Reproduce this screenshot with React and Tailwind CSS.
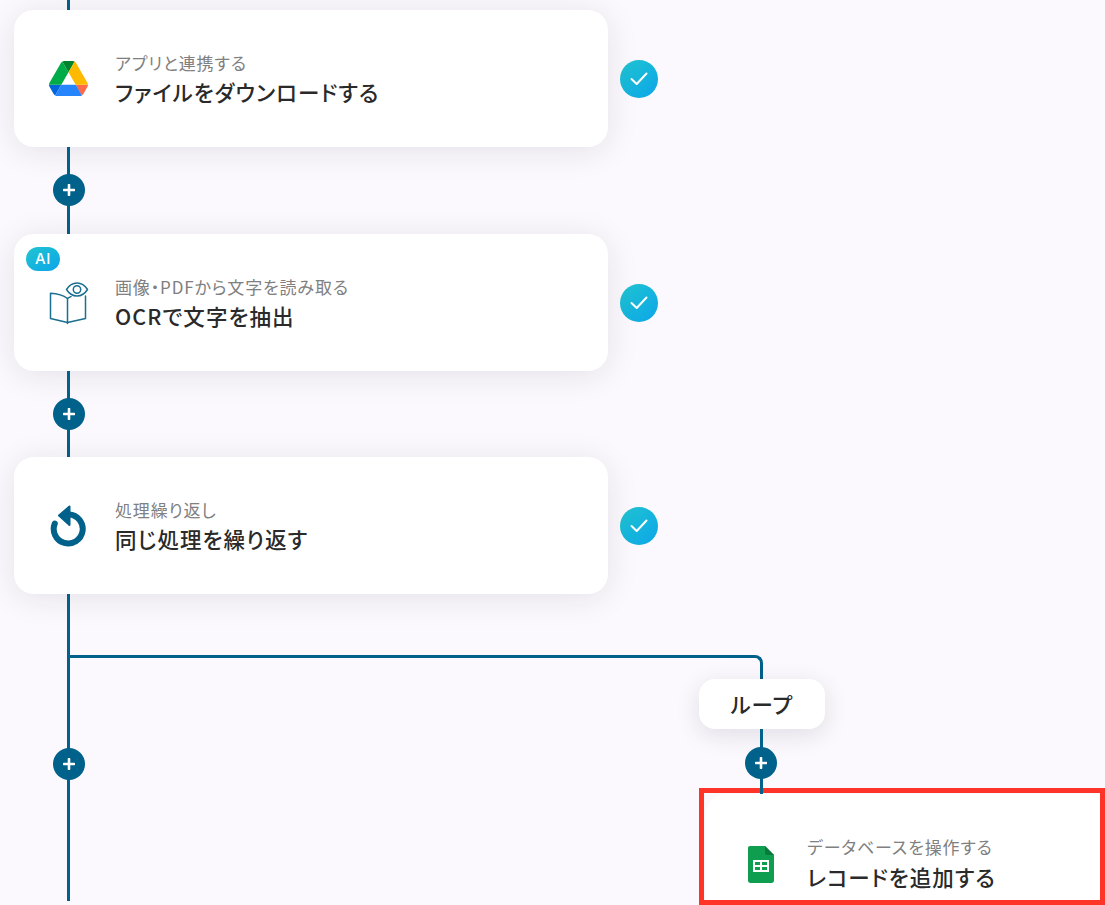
const LINE = "bg-[#00618a]";

function PlusNode({ className = "" }) {
  return (
    <div className={"absolute w-8 h-8 rounded-full bg-[#00618a] flex items-center justify-center " + className}>
      <svg width="12" height="12" viewBox="0 0 12 12">
        <path d="M6 1v10M1 6h10" stroke="#fff" strokeWidth="2.6" strokeLinecap="round" />
      </svg>
    </div>
  );
}

function Connector({ h, top }) {
  return (
    <div className={"relative " + h}>
      <div className={"ml-[53px] w-[3px] h-full " + LINE} />
      <PlusNode className={"left-[39px] " + top} />
    </div>
  );
}

function DriveIcon() {
  return (
    <svg width="39" height="35" viewBox="0 0 87.3 78">
      <path d="m6.6 66.85 3.85 6.65c.8 1.4 1.95 2.5 3.3 3.3l13.75-23.8h-27.5c0 1.55.4 3.1 1.2 4.5z" fill="#0066da" />
      <path d="m43.65 25-13.75-23.8c-1.35.8-2.5 1.9-3.3 3.3l-25.4 44a9.06 9.06 0 0 0 -1.2 4.5h27.5z" fill="#00ac47" />
      <path d="m73.55 76.8c1.35-.8 2.5-1.9 3.3-3.3l1.6-2.75 7.65-13.25c.8-1.4 1.2-2.95 1.2-4.5h-27.502l5.852 11.5z" fill="#ff6b4a" />
      <path d="m43.65 25 13.75-23.8c-1.35-.8-2.9-1.2-4.5-1.2h-18.5c-1.6 0-3.15.45-4.5 1.2z" fill="#00832d" />
      <path d="m59.8 53h-32.3l-13.75 23.8c1.35.8 2.9 1.2 4.5 1.2h50.8c1.6 0 3.15-.45 4.5-1.2z" fill="#2684fc" />
      <path d="m73.4 26.5-12.7-22c-.8-1.4-1.95-2.5-3.3-3.3l-13.75 23.8 16.15 28h27.45c0-1.55-.4-3.1-1.2-4.5z" fill="#ffba00" />
    </svg>
  );
}

function BookIcon() {
  return (
    <svg width="40" height="44" viewBox="0 0 40 44" fill="none" stroke="#1b6f90" strokeWidth="1.5" strokeLinejoin="round" strokeLinecap="round">
      <path d="M18.5 17.5C14 14 7 12.5 1.5 12.2V37.5L18.5 41.5L36.5 37.5V15" />
      <path d="M18.5 17.5V42.5" />
      <path d="M18.5 17.5C20 16.5 21 16 22 15.6" />
      <path d="M17.5 8.5C20 4.5 24 2 28 2C32 2 36 4.5 38.5 8.5C36 12.5 32 15 28 15C24 15 20 12.5 17.5 8.5Z" />
      <circle cx="28" cy="8.5" r="3.7" />
    </svg>
  );
}

function LoopIcon() {
  return (
    <svg width="38" height="44" viewBox="0 0 38 44" fill="none">
      <path d="M4.8 19.5A14.5 14.5 0 1 0 19 10.5" stroke="#00618a" strokeWidth="6" strokeLinecap="round" />
      <path d="M9 11.5L19.5 2.5V21Z" fill="#00618a" stroke="#00618a" strokeWidth="2" strokeLinejoin="round" />
    </svg>
  );
}

function SheetsIcon() {
  return (
    <svg width="26" height="37" viewBox="0 0 26 37">
      <path d="M2 0H17L26 9V34.5C26 35.9 24.9 37 23.5 37H2.5C1.1 37 0 35.9 0 34.5V2C0 0.9 0.9 0 2 0Z" fill="#0f9d50" />
      <path d="M17 0L26 9H19C17.9 9 17 8.1 17 7Z" fill="#0a7a3c" />
      <path fillRule="evenodd" d="M5 14H21V26H5ZM7 16V19H12V16ZM14 16V19H19V16ZM7 21V24H12V21ZM14 21V24H19V21Z" fill="#fff" />
    </svg>
  );
}

function CheckBadge() {
  return (
    <div className="w-[38px] h-[38px] rounded-full bg-gradient-to-br from-[#22c4cf] to-[#0ea5e9] flex items-center justify-center">
      <svg width="18" height="14" viewBox="0 0 18 14" fill="none">
        <path d="M1.5 7L6.7 12L16.5 1.5" stroke="#fff" strokeWidth="2" strokeLinecap="round" strokeLinejoin="round" />
      </svg>
    </div>
  );
}

const SUB = "text-[17px] leading-[24px] text-[#808080] tracking-[0.05em] [font-feature-settings:'palt']";
const TITLE = "text-[21.5px] leading-[30px] font-medium text-[#2a2a2a] tracking-[0.05em] [font-feature-settings:'palt']";

function CardBody({ icon, sub, title }) {
  return (
    <div className="flex items-center h-full">
      <div className="w-[101px] flex justify-center pl-[8px] shrink-0">{icon}</div>
      <div className="flex flex-col pt-[1px]">
        <span className={SUB}>{sub}</span>
        <span className={TITLE + " mt-[2px]"}>{title}</span>
      </div>
    </div>
  );
}

function Step({ icon, sub, title, ai }) {
  return (
    <div className="flex items-center">
      <div className="relative w-[594px] h-[137px] bg-white rounded-[20px] shadow-[0_4px_32px_rgba(30,20,60,0.10)]">
        {ai && (
          <div className="absolute left-[12px] top-[13px] w-[34px] h-[24px] rounded-full bg-gradient-to-br from-[#22c4cf] to-[#0ea5e9] flex items-center justify-center text-white text-[15px] font-medium tracking-[0.04em] font-['Inter',sans-serif]">
            AI
          </div>
        )}
        <CardBody icon={icon} sub={sub} title={title} />
      </div>
      <div className="ml-[12px]">
        <CheckBadge />
      </div>
    </div>
  );
}

export default function App() {
  return (
    <div className="h-[905px] overflow-hidden bg-[#fbf9fd] font-['Noto_Sans_CJK_JP','Noto_Sans',sans-serif]">
      <div className="ml-[14px] flex flex-col">
        <div className={"ml-[53px] w-[3px] h-[10px] " + LINE} />
        <Step icon={<DriveIcon />} sub="アプリと連携する" title="ファイルをダウンロードする" />
        <Connector h="h-[87px]" top="top-[27px]" />
        <Step ai icon={<BookIcon />} sub="画像・PDFから文字を読み取る" title="OCRで文字を抽出" />
        <Connector h="h-[86px]" top="top-[27px]" />
        <Step icon={<LoopIcon />} sub="処理繰り返し" title="同じ処理を繰り返す" />

        <div className="flex items-start">
          <div className="relative w-[56px] h-[307px] shrink-0">
            <div className={"ml-[53px] w-[3px] h-full " + LINE} />
            <PlusNode className="left-[39px] top-[154px]" />
          </div>
          <div className="mt-[61px] flex flex-col">
            <div className="w-[693px] h-[24px] border-t-[3px] border-r-[3px] border-[#00618a] rounded-tr-[8px]" />
            <div className="relative z-10 ml-[629px] w-[126px] h-[50px] bg-white rounded-[16px] shadow-[0_6px_24px_rgba(30,20,60,0.12)] flex items-center justify-center text-[21.5px] font-medium text-[#2a2a2a] tracking-[0.05em] [font-feature-settings:'palt']">
              ループ
            </div>
            <div className="relative z-10 h-[65px] -mb-[6px]">
              <div className={"ml-[690px] w-[3px] h-full " + LINE} />
              <PlusNode className="left-[675px] top-[18px]" />
            </div>
            <div className="ml-[629px] w-[406px] h-[117px] border-[5px] border-[#ff3429] overflow-hidden pt-[1px] pl-[2px]">
              <div className="w-[500px] h-[137px] bg-white rounded-[20px]">
                <div className="h-full pt-[16px]">
                  <div className="flex items-center h-[100px]">
                    <div className="w-[101px] flex justify-center pl-[8px] pt-[8px] shrink-0"><SheetsIcon /></div>
                    <div className="flex flex-col pt-[7px]">
                      <span className={SUB}>データベースを操作する</span>
                      <span className={TITLE + " mt-[3px]"}>レコードを追加する</span>
                    </div>
                  </div>
                </div>
              </div>
            </div>
          </div>
        </div>
      </div>
    </div>
  );
}
